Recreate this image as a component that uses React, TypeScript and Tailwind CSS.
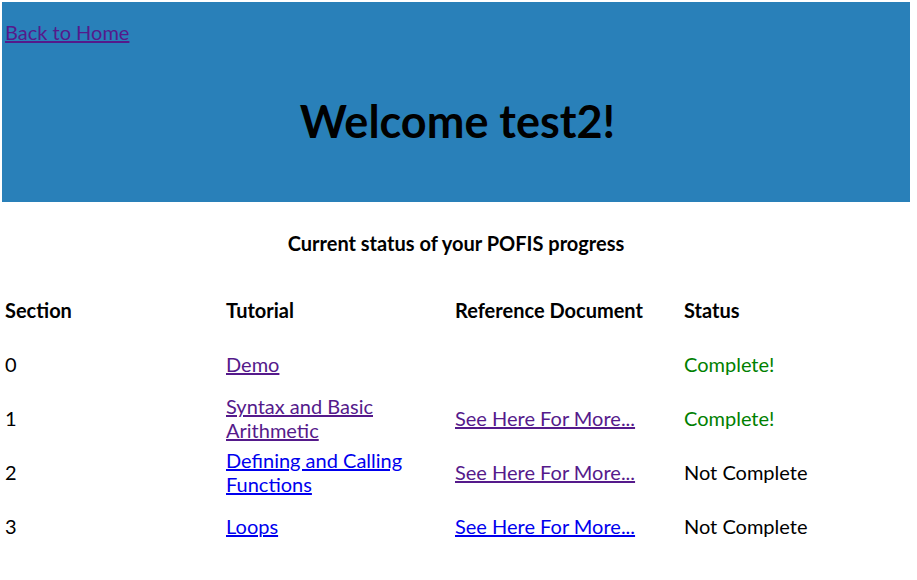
import React from 'react';

type Row = {
  section: string;
  tutorial: string;
  tutorialVisited: boolean;
  ref?: boolean;
  refVisited?: boolean;
  complete: boolean;
};

const rows: Row[] = [
  { section: '0', tutorial: 'Demo', tutorialVisited: true, complete: true },
  { section: '1', tutorial: 'Syntax and Basic Arithmetic', tutorialVisited: true, ref: true, refVisited: true, complete: true },
  { section: '2', tutorial: 'Defining and Calling Functions', tutorialVisited: false, ref: true, refVisited: true, complete: false },
  { section: '3', tutorial: 'Loops', tutorialVisited: false, ref: true, refVisited: false, complete: false },
];

export default function App() {
  return (
    <div className="font-['Lato','Liberation_Sans',sans-serif] text-black bg-white min-h-[580px] pt-[2px] pl-[2px] w-[910px]">
      {/* Banner */}
      <header className="bg-[#2980b9] h-[200px] pl-[3px] pt-[18px]">
        <div className="text-[20px] leading-[24px]">
          <a href="#" className="text-[#551a8b] underline">Back to Home</a>
        </div>
        <h1 className="text-[45px] font-bold leading-[54px] text-center mt-[50px]">Welcome test2!</h1>
      </header>

      <p className="mt-[29px] text-center text-[20px] font-bold leading-[24px]">
        Current status of your POFIS progress
      </p>

      {/* Progress table */}
      <div className="mt-[28px] pl-[3px] grid grid-cols-[221px_229px_229px_1fr] text-[20px] leading-[24px]">
        {['Section', 'Tutorial', 'Reference Document', 'Status'].map((h) => (
          <div key={h} className="h-[54px] flex items-center font-bold">{h}</div>
        ))}
        {rows.map((r) => (
          <React.Fragment key={r.section}>
            <div className="h-[54px] flex items-center">{r.section}</div>
            <div className="h-[54px] flex items-center pr-[4px]">
              <a href="#" className={r.tutorialVisited ? 'text-[#551a8b] underline' : 'text-[#0000ee] underline'}>
                {r.tutorial}
              </a>
            </div>
            <div className="h-[54px] flex items-center">
              {r.ref && (
                <a href="#" className={r.refVisited ? 'text-[#551a8b] underline' : 'text-[#0000ee] underline'}>
                  See Here For More...
                </a>
              )}
            </div>
            <div className={r.complete ? 'h-[54px] flex items-center text-[#008000]' : 'h-[54px] flex items-center'}>
              {r.complete ? 'Complete!' : 'Not Complete'}
            </div>
          </React.Fragment>
        ))}
      </div>
    </div>
  );
}
